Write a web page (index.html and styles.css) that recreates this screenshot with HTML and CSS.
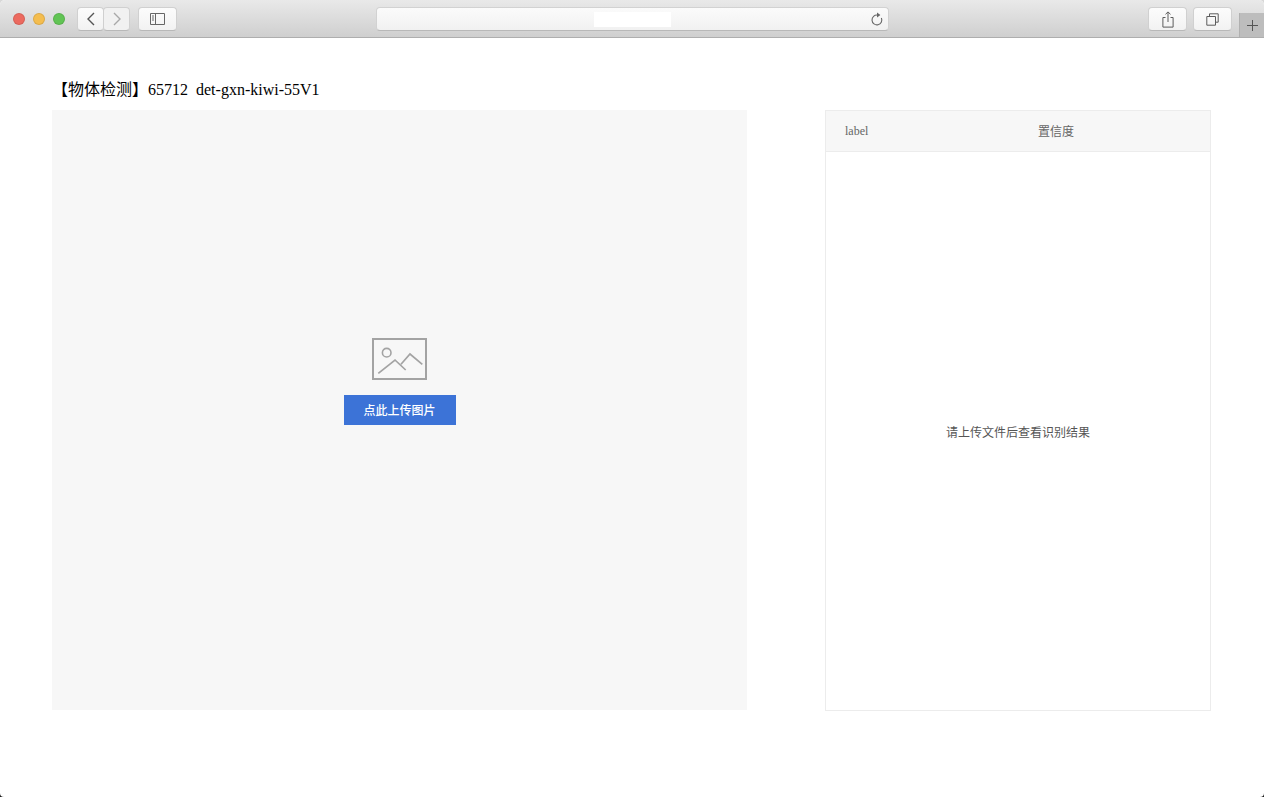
FILE: index.html
```html
<!DOCTYPE html>
<html lang="zh">
<head>
<meta charset="utf-8">
<title>物体检测</title>
<link rel="stylesheet" href="styles.css">
</head>
<body>
<div class="window">
  <header class="toolbar">
    <div class="lights">
      <span class="light red"></span><span class="light yellow"></span><span class="light green"></span>
    </div>
    <div class="navgroup">
      <button class="tb nav"><svg width="10" height="14" viewBox="0 0 10 14"><path d="M8 1 2 7l6 6" fill="none" stroke="#555" stroke-width="1.4"/></svg></button>
      <button class="tb nav"><svg width="10" height="14" viewBox="0 0 10 14"><path d="M2 1l6 6-6 6" fill="none" stroke="#a8a8a8" stroke-width="1.4"/></svg></button>
    </div>
    <button class="tb side"><svg width="15" height="12" viewBox="0 0 15 12"><path d="M.5.500h14v11H.5zM5.500.500v11M2 3h2M2 5h2M2 7h2" fill="none" stroke="#666"/></svg></button>
    <div class="address">
      <span class="url"></span>
      <svg class="reload" width="13" height="14" viewBox="0 0 13 14"><path d="M7.500 3.100A4.900 4.900 0 1 0 11.400 6" fill="none" stroke="#666" stroke-width="1.100"/><path d="M7 .6l3.400 2.500L7 5.400z" fill="#666"/></svg>
    </div>
    <button class="tb action"><svg width="12" height="17" viewBox="0 0 12 17"><path d="M3.500 6.500H.9v9.600h10.200V6.500H8.500M6 11V1M3.500 3.300 6 .9l2.500 2.400" fill="none" stroke="#5c5c5c"/></svg></button>
    <button class="tb action"><svg width="13" height="13" viewBox="0 0 13 13"><path d="M3.500 3V.8h8.700v8.400H9.500M.8 3.500h8.700v8.700H.8z" fill="none" stroke="#5c5c5c"/></svg></button>
    <div class="newtab"><svg width="11" height="11" viewBox="0 0 11 11"><path d="M5.500 0v11M0 5.500h11" stroke="#555" fill="none"/></svg></div>
  </header>

  <main class="page">
    <h1 class="title">【物体检测】65712&nbsp;&nbsp;det-gxn-kiwi-55V1</h1>
    <div class="columns">
      <section class="upload">
        <svg class="placeholder" width="55" height="42" viewBox="0 0 55 42">
          <path d="M1 1h53v40H1z" fill="none" stroke="#a3a3a3" stroke-width="2"/>
          <circle cx="14.700" cy="14.700" r="4.300" fill="none" stroke="#a3a3a3" stroke-width="1.600"/>
          <path d="M6.300 35.300 23 22l10.700 10M29 26.300 38 16l12.300 10.300" fill="none" stroke="#a3a3a3" stroke-width="1.700"/>
        </svg>
        <button class="upload-btn">点此上传图片</button>
      </section>
      <section class="results">
        <div class="results-head"><span class="col-label">label</span><span class="col-conf">置信度</span></div>
        <div class="results-empty">请上传文件后查看识别结果</div>
      </section>
    </div>
  </main>
</div>
</body>
</html>
```
FILE: styles.css
```css
* { box-sizing: border-box; }
html, body { margin: 0; height: 100%; overflow: hidden; }
html { background: linear-gradient(#d8d8d8 50%, #1c1c1c 50%); }
body { font-family: "Liberation Serif", "Noto Sans CJK SC", serif; }
.window {
  height: 797px; display: flex; flex-direction: column; overflow: hidden;
  background: #fff; border-radius: 5px 5px 4px 4px;
}
.toolbar {
  height: 38px; flex: none; display: flex; align-items: flex-start;
  padding-top: 7px; position: relative;
  background: linear-gradient(#e9e9e9, #cfcfcf);
  border-bottom: 1px solid #aeaeae;
}
.lights { display: flex; gap: 8px; margin: 6px 0 0 13px; }
.light { width: 12px; height: 12px; border-radius: 50%; border: 1px solid rgba(0, 0, 0, .1); }
.red { background: #ec6a5f; }
.yellow { background: #f4bd4f; }
.green { background: #61c454; }
.tb {
  height: 24px; padding: 0; display: flex; align-items: center; justify-content: center;
  background: linear-gradient(#fcfcfc, #f2f2f2);
  border: 1px solid #d0d0d0; border-bottom-color: #b8b8b8; border-radius: 4px;
}
.navgroup { display: flex; margin-left: 12px; }
.nav { width: 27px; }
.nav + .nav { margin-left: -1px; background: #f1f1f1; }
.side { width: 39px; margin-left: 8px; }
.address {
  width: 513px; height: 24px; margin-left: 199px; position: relative;
  display: flex; align-items: center; justify-content: center;
  background: linear-gradient(#fbfbfb, #f1f1f1);
  border: 1px solid #d2d2d2; border-bottom-color: #b8b8b8; border-radius: 4px;
}
.url { width: 77px; height: 15px; background: #fff; margin: 1px 0 0 -1px; }
.reload { position: absolute; right: 5px; top: 4px; }
.action { width: 39px; }
.address + .action { margin-left: 259px; }
.action + .action { margin-left: 6px; }
.newtab {
  position: absolute; right: 0; top: 13px; width: 25px; height: 24px;
  background: #bdbdbd; display: flex; align-items: center; justify-content: center;
  border-left: 1px solid #b0b0b0;
}
.page { flex: 1; padding: 42px 53px 0 52px; }
.title { margin: 0 0 10px; font-size: 16px; font-weight: 400; line-height: 20px; color: #000; white-space: pre; }
.columns { display: flex; justify-content: space-between; }
.upload {
  width: 695px; height: 600px; background: #f7f7f7;
  display: flex; flex-direction: column; align-items: center; justify-content: center;
  padding-bottom: 57px;
}
.placeholder { display: block; margin-bottom: 15px; }
.upload-btn {
  width: 112px; height: 30px; border: 0; padding: 0;
  background: #3c73d7; color: #fff; font: 500 12px "Liberation Serif", "Noto Sans CJK SC", serif;
}
.results { width: 386px; height: 601px; border: 1px solid #ececec; display: flex; flex-direction: column; }
.results-head {
  height: 41px; flex: none; display: flex; align-items: center;
  background: #f7f7f7; border-bottom: 1px solid #ececec;
  font-size: 12px; color: #666;
}
.col-label { width: 192px; padding-left: 19px; }
.col-conf { width: 76px; text-align: center; }
.results-empty {
  flex: 1; display: flex; align-items: center; justify-content: center;
  padding-top: 2px; font-size: 12px; color: #555;
}
```
